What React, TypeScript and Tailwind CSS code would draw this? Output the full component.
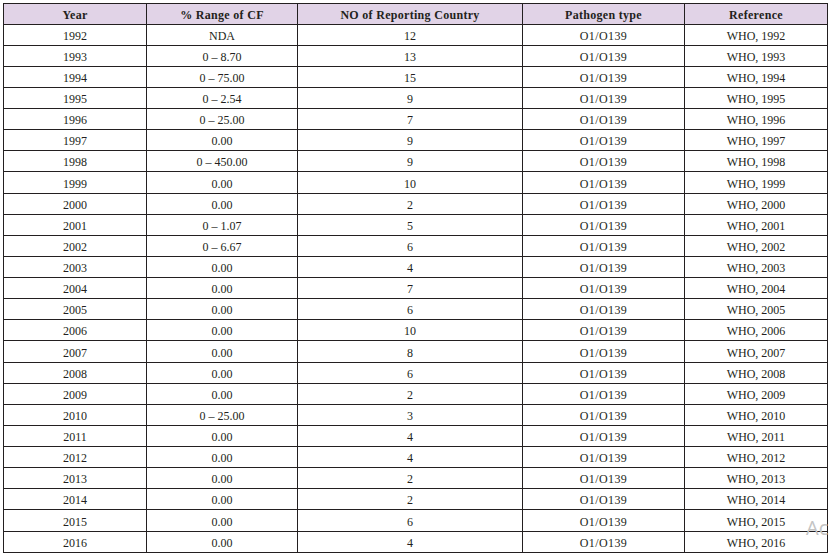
import React from "react";

const rows: [string, string, string][] = [
  ["1992", "NDA", "12"],
  ["1993", "0 – 8.70", "13"],
  ["1994", "0 – 75.00", "15"],
  ["1995", "0 – 2.54", "9"],
  ["1996", "0 – 25.00", "7"],
  ["1997", "0.00", "9"],
  ["1998", "0 – 450.00", "9"],
  ["1999", "0.00", "10"],
  ["2000", "0.00", "2"],
  ["2001", "0 – 1.07", "5"],
  ["2002", "0 – 6.67", "6"],
  ["2003", "0.00", "4"],
  ["2004", "0.00", "7"],
  ["2005", "0.00", "6"],
  ["2006", "0.00", "10"],
  ["2007", "0.00", "8"],
  ["2008", "0.00", "6"],
  ["2009", "0.00", "2"],
  ["2010", "0 – 25.00", "3"],
  ["2011", "0.00", "4"],
  ["2012", "0.00", "4"],
  ["2013", "0.00", "2"],
  ["2014", "0.00", "2"],
  ["2015", "0.00", "6"],
  ["2016", "0.00", "4"],
];

const headers = ["Year", "% Range of CF", "NO of Reporting Country", "Pathogen type", "Reference"];

const td = "border border-[#231f20] p-0 pt-[2px] text-center align-middle text-[12px] leading-none";

export default function App() {
  return (
    <div className="relative w-[830px] h-[555px] overflow-hidden bg-white">
      <div className="pt-[3px] pl-[3px]">
        <table
          className="table-fixed w-[824px] border-collapse text-[#231f20]"
          style={{ fontFamily: '"Liberation Serif", "Times New Roman", serif' }}
        >
          <colgroup>
            <col className="w-[143px]" />
            <col className="w-[151px]" />
            <col className="w-[225px]" />
            <col className="w-[162px]" />
            <col className="w-[143px]" />
          </colgroup>
          <thead>
            <tr className="h-[21px] bg-[#e1d3e7]">
              {headers.map((h) => (
                <th
                  key={h}
                  className="border border-[#231f20] p-0 pt-[1px] text-center align-middle text-[12px] font-bold tracking-[0.3px] leading-none"
                >
                  {h}
                </th>
              ))}
            </tr>
          </thead>
          <tbody>
            {rows.map(([y, r, n], i) => (
              <tr key={y} className={i % 8 === 7 ? "h-[22px]" : "h-[21px]"}>
                <td className={td}>{y}</td>
                <td className={td}>{r}</td>
                <td className={td}>{n}</td>
                <td className={`${td} tracking-[0.4px]`}>O1/O139</td>
                <td className={td}>WHO, {y}</td>
              </tr>
            ))}
          </tbody>
        </table>
      </div>
      <div
        className="pointer-events-none absolute left-[806px] top-[516px] whitespace-nowrap text-[20px] leading-[24px] text-[#c4c4c4]"
        style={{ fontFamily: '"Open Sans", "Liberation Sans", sans-serif' }}
      >
        Ac
      </div>
    </div>
  );
}
